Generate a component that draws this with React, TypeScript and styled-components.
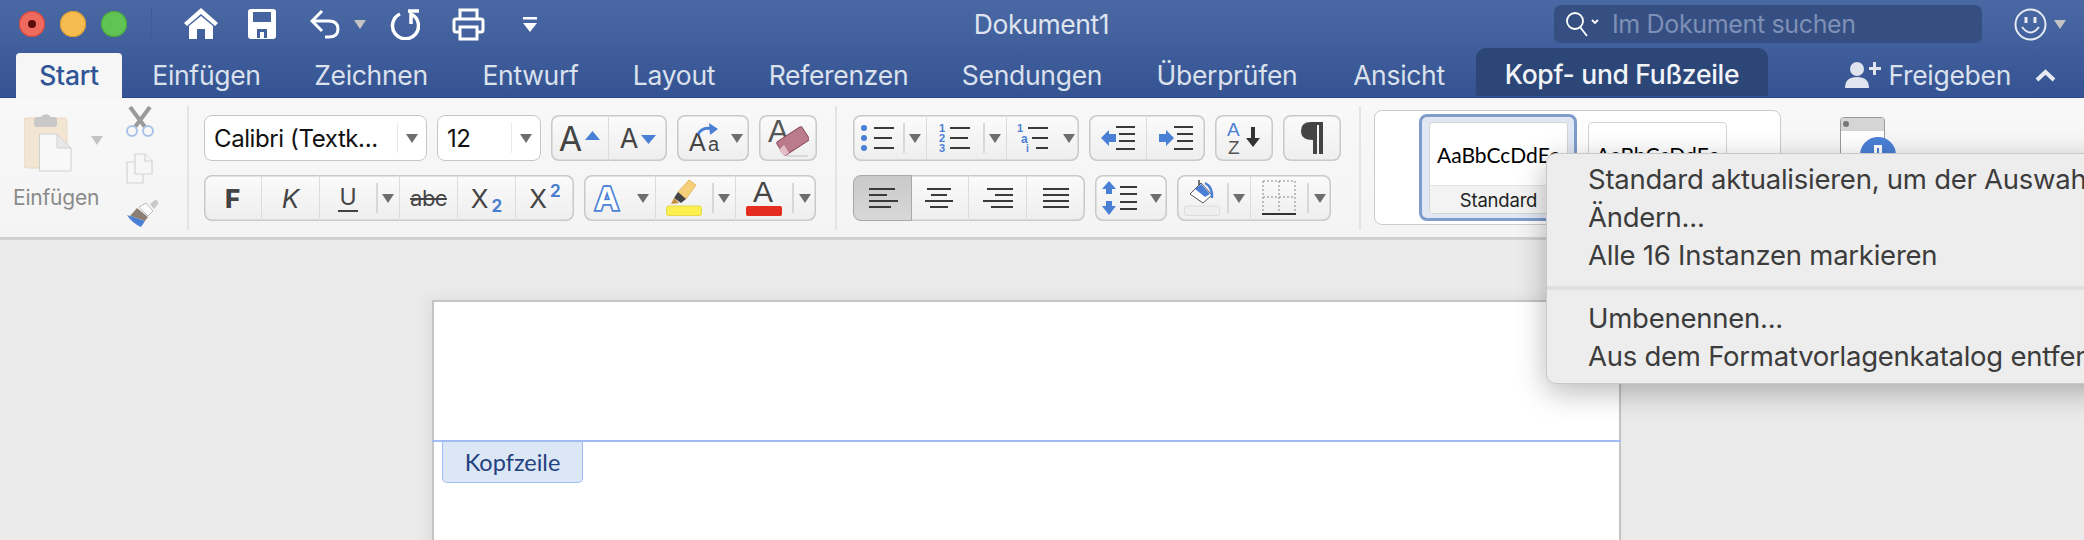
import React from "react";
import styled, { createGlobalStyle } from "styled-components";

const GlobalStyle = createGlobalStyle`
  html, body {
    margin: 0;
    height: 540px;
    overflow: hidden;
    background: #ebebeb;
    font-family: Inter, "Liberation Sans", sans-serif;
  }
`;

const Screen = styled.div`
  position: relative;
  width: 2084px;
  height: 540px;
  overflow: hidden;
  display: flex;
  flex-direction: column;
`;

const TitleBar = styled.header`
  height: 98px;
  flex: none;
  background: linear-gradient(#4a69a4, #355392);
  border-bottom: 1px solid #2b4a85;
  box-sizing: border-box;
  display: flex;
  flex-direction: column;
`;

const TopRow = styled.div`
  height: 48px;
  flex: none;
  display: grid;
  grid-template-columns: 1fr auto 1fr;
  align-items: center;
`;

const QuickBar = styled.div`
  display: flex;
  align-items: center;
  padding-left: 19px;
`;

const Light = styled.span<{ $color: string; $edge: string }>`
  width: 26px;
  height: 26px;
  border-radius: 50%;
  background: ${(p) => p.$color};
  box-shadow: inset 0 0 0 1px ${(p) => p.$edge};
  margin-right: 15px;
  display: flex;
  align-items: center;
  justify-content: center;
  flex: none;
`;

const LightDot = styled.span`
  width: 8px;
  height: 8px;
  border-radius: 50%;
  background: #5d0c09;
`;

const BarSep = styled.span`
  width: 1px;
  height: 32px;
  background: #3e5d98;
  margin: 0 32px 0 9px;
`;

const QuickIcon = styled.span<{ $gap: number }>`
  display: flex;
  align-items: center;
  margin-right: ${(p) => p.$gap}px;
`;

const DocTitle = styled.div`
  color: #dfe4ef;
  font-size: 26.5px;
  letter-spacing: -0.4px;
  margin-left: -1px;
`;

const RightTop = styled.div`
  display: flex;
  align-items: center;
  justify-content: flex-end;
  padding-right: 18px;
`;

const SearchBox = styled.div`
  width: 428px;
  height: 38px;
  border-radius: 7px;
  background: #364f82;
  box-sizing: border-box;
  padding-left: 12px;
  display: flex;
  align-items: center;
  gap: 13px;
  color: #7e90b6;
  font-size: 25px;
  letter-spacing: -0.35px;
  margin-right: 32px;
`;

const SmileyCaret = styled.span`
  margin-left: 7px;
  display: flex;
`;

const TabRow = styled.nav`
  height: 49px;
  flex: none;
  display: flex;
  align-items: flex-end;
  padding-left: 16px;
`;

const Tab = styled.div<{ $w: number; $active?: boolean; $contextual?: boolean }>`
  width: ${(p) => p.$w}px;
  flex: none;
  box-sizing: border-box;
  text-align: center;
  font-size: 26.5px;
  letter-spacing: -0.3px;
  color: #dbe1ed;
  height: 44px;
  line-height: 44px;
  ${(p) => p.$active && `
    background: #f6f6f6;
    color: #2f5597;
    font-weight: 500;
    border-radius: 4px 4px 0 0;
    height: 45px;
    margin-bottom: -1px;
  `}
  ${(p) => p.$contextual && `
    background: #2c4678;
    color: #f2f4f8;
    font-weight: 500;
    border-radius: 10px 10px 0 0;
    height: 48px;
    line-height: 52px;
    margin-left: 7px;
    margin-bottom: 1px;
  `}
`;

const ShareBox = styled.div`
  margin-left: auto;
  display: flex;
  align-items: center;
  height: 44px;
  color: #dbe1ed;
  font-size: 26.5px;
  letter-spacing: -0.3px;
  padding-right: 28px;
  gap: 7px;
`;

const Chevron = styled.span`
  margin-left: 17px;
  display: flex;
`;

const Ribbon = styled.section`
  height: 142px;
  flex: none;
  box-sizing: border-box;
  background: linear-gradient(#f8f8f8, #f4f4f4);
  border-bottom: 3px solid #d0d0d0;
  display: flex;
  align-items: flex-start;
`;

const Divider = styled.div`
  width: 2px;
  height: 124px;
  margin-top: 8px;
  background: #e4e4e4;
  flex: none;
`;

const ClipSection = styled.div`
  width: 187px;
  height: 130px;
  flex: none;
  display: flex;
  box-sizing: border-box;
  padding-top: 8px;
`;

const PasteColumn = styled.div`
  width: 126px;
  flex: none;
  padding-left: 13px;
  box-sizing: border-box;
`;

const PasteIcon = styled.div`
  padding-left: 11px;
  height: 62px;
  margin-top: 6px;
  display: flex;
  gap: 19px;
`;

const PasteCaret = styled.span`
  margin-top: 24px;
  display: flex;
`;

const PasteLabel = styled.div`
  color: #8a8a8a;
  font-size: 21px;
  margin-top: 11px;
  letter-spacing: -0.2px;
`;

const ClipTools = styled.div`
  display: flex;
  flex-direction: column;
  height: 122px;
  justify-content: space-between;
`;

const ToolSection = styled.div<{ $left: number; $w: number; $right: number }>`
  width: ${(p) => p.$w}px;
  margin: 17px ${(p) => p.$right}px 0 ${(p) => p.$left}px;
  flex: none;
  display: flex;
  flex-direction: column;
  gap: 14px;
`;

const ToolRow = styled.div`
  display: flex;
  gap: 10px;
  height: 46px;
`;

const SelectBox = styled.div<{ $w: number }>`
  width: ${(p) => p.$w}px;
  height: 46px;
  flex: none;
  box-sizing: border-box;
  background: #fff;
  border: 1.5px solid #c6c6c6;
  border-radius: 8px;
  display: flex;
  align-items: center;
  font-size: 24px;
  color: #111;
  padding-left: 9px;
`;

const SelectText = styled.span`
  flex: 1;
  white-space: nowrap;
  letter-spacing: -0.4px;
`;

const SelectArrow = styled.span`
  width: 28px;
  height: 30px;
  flex: none;
  border-left: 1.5px solid #e8e8e8;
  display: flex;
  align-items: center;
  justify-content: center;
`;

const Group = styled.div`
  display: flex;
  height: 46px;
  flex: none;
  border-radius: 8px;
  background: linear-gradient(#fbfbfb, #eeeeee);
  box-shadow: inset 0 0 0 1.5px #c9c9c9;
  overflow: hidden;
`;

const Cell = styled.div<{ $w: number; $active?: boolean; $last?: boolean }>`
  width: ${(p) => p.$w}px;
  flex: none;
  box-sizing: border-box;
  display: flex;
  align-items: center;
  justify-content: center;
  color: #444;
  border-right: ${(p) => (p.$last ? "none" : "1.5px solid #dcdcdc")};
  ${(p) => p.$active && `
    background: linear-gradient(#c9c9c9, #d8d8d8);
    border: 1.5px solid #a8a8a8;
    border-radius: 8px 0 0 8px;
  `}
`;

const CellPart = styled.span<{ $w: number }>`
  width: ${(p) => p.$w}px;
  flex: none;
  display: flex;
  align-items: center;
  justify-content: center;
`;

const Split = styled.span`
  width: 1.5px;
  height: 30px;
  background: #d8d8d8;
  flex: none;
`;

const Caret = styled.span<{ $light?: boolean }>`
  width: 0;
  height: 0;
  flex: none;
  border-left: 6px solid transparent;
  border-right: 6px solid transparent;
  border-top: 9px solid ${(p) => (p.$light ? "#c4c4c4" : "#6e6e6e")};
`;

const CaretSlot = styled.span`
  flex: 1;
  display: flex;
  align-items: center;
  justify-content: center;
`;

const Letter = styled.span<{ $size: number; $weight?: number; $italic?: boolean }>`
  font-family: Inter, "Liberation Sans", sans-serif;
  font-size: ${(p) => p.$size}px;
  font-weight: ${(p) => p.$weight ?? 400};
  font-style: ${(p) => (p.$italic ? "italic" : "normal")};
  color: #444;
  display: inline-flex;
  align-items: center;
`;

const Underlined = styled(Letter)`
  border-bottom: 2px solid #444;
  line-height: 26px;
  padding: 0 1px;
`;

const Struck = styled(Letter)`
  text-decoration: line-through;
  letter-spacing: -0.5px;
`;

const Sub = styled.span`
  font-family: Inter, "Liberation Sans", sans-serif;
  font-size: 17px;
  font-weight: 700;
  color: #4a7fd0;
  margin: 16px 0 0 3px;
`;

const Sup = styled(Sub)`
  margin: 0 0 14px 3px;
`;

const StepArrow = styled.svg<{ $up: boolean }>`
  margin-left: 3px;
  margin-bottom: ${(p) => (p.$up ? 6 : -2)}px;
`;

const Gallery = styled.div`
  width: 407px;
  height: 115px;
  margin: 12px 0 0 13px;
  flex: none;
  box-sizing: border-box;
  background: #fff;
  border: 1.5px solid #cccccc;
  border-radius: 8px;
  display: flex;
  align-items: flex-start;
  padding: 3px 0 0 44px;
`;

const StyleFrame = styled.div`
  width: 158px;
  height: 107px;
  box-sizing: border-box;
  background: #e1e7f3;
  border: 3px solid #7f9ccb;
  border-radius: 8px;
  padding: 5px 7px;
  flex: none;
`;

const StyleCard = styled.div<{ $plain?: boolean }>`
  width: 139px;
  height: 92px;
  box-sizing: border-box;
  border: 1px solid #d4d4d4;
  border-radius: 4px;
  background: #fff;
  display: flex;
  flex-direction: column;
  overflow: hidden;
  flex: none;
  ${(p) => p.$plain && `
    margin: 8px 0 0 11px;
  `}
`;

const StylePreview = styled.div`
  height: 62px;
  flex: none;
  display: flex;
  align-items: center;
  padding-left: 7px;
  font-family: Lato, sans-serif;
  font-size: 21px;
  color: #000;
  white-space: nowrap;
`;

const StyleName = styled.div`
  flex: 1;
  background: #f3f3f3;
  border-top: 1px solid #e3e3e3;
  display: flex;
  align-items: center;
  justify-content: center;
  font-size: 18.5px;
  letter-spacing: -0.2px;
  color: #222;
`;

const PaneIcon = styled.div`
  margin: 19px 0 0 59px;
  display: flex;
`;

const Canvas = styled.main`
  flex: 1;
  background: #ebebeb;
  padding: 60px 0 0 432px;
  overflow: hidden;
`;

const Page = styled.div`
  width: 1189px;
  height: 300px;
  box-sizing: border-box;
  background: #fff;
  border: 2px solid #c4c4c4;
  border-bottom: none;
  box-shadow: -6px -3px 14px rgba(0, 0, 0, 0.05);
  padding-top: 138px;
`;

const HeaderRule = styled.div`
  height: 2px;
  background: #a0bcf5;
  margin-left: -2px;
  margin-right: -2px;
`;

const HeaderTag = styled.div`
  width: 141px;
  height: 41px;
  margin-left: 8px;
  box-sizing: border-box;
  background: #dce7f5;
  border: 1px solid #a0bcf5;
  border-top: none;
  border-radius: 0 0 5px 5px;
  display: flex;
  align-items: center;
  justify-content: center;
  font-family: Lato, sans-serif;
  font-size: 23.5px;
  color: #23407f;
`;

const ContextMenu = styled.div`
  position: absolute;
  left: 1546px;
  top: 153px;
  width: 640px;
  height: 231px;
  box-sizing: border-box;
  background: #ededed;
  border: 1px solid #c8c8c8;
  border-radius: 10px;
  box-shadow: 0 8px 30px rgba(0, 0, 0, 0.28);
  padding-top: 6px;
`;

const MenuItem = styled.div`
  height: 38px;
  line-height: 38px;
  padding-left: 41px;
  font-size: 27.5px;
  letter-spacing: -0.25px;
  color: #3c3c3c;
  white-space: nowrap;
`;

const MenuSep = styled.div`
  height: 4px;
  background: #dfdfdf;
  margin: 12px 0 9px;
`;

const Blue = "#4a7fd6";
const Ink = "#3a3a3a";

const HomeIcon = () => (
  <svg width="34" height="32" viewBox="0 0 34 32">
    <path fill="#fff" d="M17 0 L34 15 L31 18 L17 6 L3 18 L0 15z" />
    <path fill="#fff" d="M5 18 L17 8 L29 18 V31 H21 V21 H13 V31 H5z" />
  </svg>
);

const SaveIcon = () => (
  <svg width="28" height="30" viewBox="0 0 28 30">
    <path
      fill="#fff"
      fillRule="evenodd"
      d="M3 0 H25 Q28 0 28 3 V27 Q28 30 25 30 H3 Q0 30 0 27 V3 Q0 0 3 0z M5 3 V13 H23 V3z M9 29 H19 V20 H9z M12 29 V23 H16 V29z"
    />
  </svg>
);

const UndoIcon = () => (
  <svg width="30" height="30" viewBox="0 0 30 30" fill="none" stroke="#fff" strokeWidth="3">
    <path d="M12 2 L2 12 L12 22" />
    <path d="M2 12 H19 Q28 12 28 20 Q28 28 19 28 H15" />
  </svg>
);

const RedoIcon = () => (
  <svg width="30" height="32" viewBox="0 0 30 32" fill="none" stroke="#fff" strokeWidth="3.5">
    <path d="M10 6 A13 13 0 1 0 21 6 V16" />
    <path d="M18 3 H29" />
  </svg>
);

const PrintIcon = () => (
  <svg width="33" height="33" viewBox="0 0 33 33" fill="none" stroke="#fff" strokeWidth="3">
    <path d="M8 11 V2 H25 V11" />
    <path d="M8 24 H4 Q2 24 2 22 V13 Q2 11 4 11 H29 Q31 11 31 13 V22 Q31 24 29 24 H25" />
    <path d="M8 19 H25 V31 H8z" />
  </svg>
);

const CustomizeIcon = () => (
  <svg width="14" height="15" viewBox="0 0 14 15">
    <path fill="#fff" d="M0 0 H14 V2.5 H0z M0 6 H14 L7 15z" />
  </svg>
);

const LensIcon = () => (
  <svg width="33" height="26" viewBox="0 0 33 26" fill="none" stroke="#fff" strokeWidth="1.8">
    <circle cx="9" cy="10" r="8" />
    <path d="M14 16 L21 25" />
    <path d="M26 9 L29 12 L32 9" />
  </svg>
);

const SmileyIcon = () => (
  <svg width="33" height="33" viewBox="0 0 33 33" fill="none" stroke="#e6eaf3" strokeWidth="2">
    <circle cx="16.5" cy="16.5" r="15" />
    <path d="M8 19 Q16.5 30 25 19" />
    <path d="M12 9 V15 M21 9 V15" strokeWidth="3" />
  </svg>
);

const ShareIcon = () => (
  <svg width="36" height="28" viewBox="0 0 36 28" fill="#dfe4ef">
    <circle cx="12" cy="8" r="7" />
    <path d="M0 27 Q0 16 12 16 Q24 16 24 27z" />
    <path d="M24 6 H28 V1 H31 V6 H36 V9 H31 V14 H28 V9 H24z" />
  </svg>
);

const ChevronIcon = () => (
  <svg width="21" height="13" viewBox="0 0 21 13" fill="none" stroke="#e6eaf3" strokeWidth="4">
    <path d="M2 11 L10.5 3 L19 11" />
  </svg>
);

const ClipboardIcon = () => (
  <svg width="48" height="60" viewBox="0 0 48 60">
    <rect x="0" y="6" width="43" height="50" rx="3" fill="#f2e5d2" stroke="#e8d9c2" />
    <path fill="#c8c8c8" d="M10 8 Q10 5 14 5 H17 A6 6 0 0 1 27 5 H30 Q33 5 33 8 V12 Q33 15 30 15 H13 Q10 15 10 12z" />
    <path fill="#f8f8f8" stroke="#d0d0d0" d="M15.5 22 H33 L47 36 V59 H15.5z" />
    <path fill="#e8e8e8" stroke="#d0d0d0" d="M33 22 V36 H47z" />
  </svg>
);

const ScissorsIcon = () => (
  <svg width="28" height="32" viewBox="0 0 28 32" fill="none">
    <path stroke="#9a9a9a" strokeWidth="4" d="M4 1 L19 21 M24 1 L9 21" />
    <circle cx="6" cy="25" r="5" stroke="#a9c3e8" strokeWidth="2" />
    <circle cx="22" cy="25" r="5" stroke="#a9c3e8" strokeWidth="2" />
  </svg>
);

const CopyIcon = () => (
  <svg width="27" height="31" viewBox="0 0 27 31" fill="#f6f6f6" stroke="#d4d4d4" strokeWidth="1.2">
    <path d="M1 9 H17 V30 H1z" />
    <path d="M9 1 H19 L26 8 V21 H9z" />
    <path d="M19 1 V8 H26" />
  </svg>
);

const BrushIcon = () => (
  <svg width="33" height="29" viewBox="0 0 33 29">
    <path fill="#c9c9c9" d="M24 5 L29 1 Q33 1 32 5 L28 10z" />
    <path fill="#fbfbfb" stroke="#bdbdbd" d="M13 8 L20 4 L27 12 L22 17z" />
    <path fill="#8d7f74" d="M11 9 L22 18 L19 22 L4 17z" />
    <path fill="#4a7fd6" d="M1 16 L19 22 L15 28 Q6 24 1 16z" />
  </svg>
);

const AStep = ({ up, size }: { up: boolean; size: number }) => (
  <>
    <Letter $size={size}>A</Letter>
    <StepArrow $up={up} width="15" height="9" viewBox="0 0 15 9">
      <path fill={Blue} d={up ? "M7.5 0 L15 9 H0z" : "M0 0 H15 L7.5 9z"} />
    </StepArrow>
  </>
);

const ChangeCaseIcon = () => (
  <svg width="44" height="30" viewBox="0 0 44 30" fontFamily="Liberation Sans" fill="#444">
    <text x="10" y="28" fontSize="25">A</text>
    <text x="29" y="28" fontSize="20">a</text>
    <path fill="none" stroke={Blue} strokeWidth="3" d="M19 11 Q24 3 33 6" />
    <path fill={Blue} d="M30 0 L39 6 L31 12z" />
  </svg>
);

const EraserIcon = () => (
  <svg width="42" height="38" viewBox="0 0 42 38">
    <text x="1" y="23" fontFamily="Liberation Sans" fontSize="31" fill="#555">A</text>
    <rect x="11" y="14" width="30" height="16" rx="2" fill="#bb7b8d" stroke="#8e5064" transform="rotate(-33 26 22)" />
    <path fill="#e6bcc8" d="M12 31 L17 37 L22 34 L17 26z" />
    <path stroke="#d0d0d0" strokeWidth="1.5" d="M20 37 H41" />
  </svg>
);

const GlowA = () => (
  <svg width="30" height="32" viewBox="0 0 30 32">
    <text
      x="3"
      y="28"
      fontFamily="Liberation Sans"
      fontWeight="700"
      fontSize="33"
      fill="#fff"
      stroke={Blue}
      strokeWidth="3.5"
      paintOrder="stroke"
    >
      A
    </text>
  </svg>
);

const MarkerIcon = () => (
  <svg width="36" height="38" viewBox="0 0 36 38">
    <path fill="#f5cf7a" stroke="#e5bb62" d="M12 13 L23 1 L30 6 L20 20z" />
    <path fill="#444" d="M12 13 L20 20 L15 24 L8 19z" />
    <path fill="#c58f3a" d="M8 19 L13 24 L5 25z" />
    <rect x="0.5" y="27" width="35" height="9.5" rx="2" fill="#fbf050" stroke="#e4d94a" />
  </svg>
);

const FontColorIcon = () => (
  <svg width="36" height="38" viewBox="0 0 36 38">
    <text x="7" y="23" fontFamily="Liberation Sans" fontSize="30" fill="#444">A</text>
    <rect x="0" y="27" width="36" height="10" rx="2" fill="#e42c1f" />
  </svg>
);

const BulletsIcon = () => (
  <svg width="34" height="26" viewBox="0 0 34 26">
    <circle cx="3" cy="3" r="3" fill={Blue} />
    <circle cx="3" cy="13" r="3" fill={Blue} />
    <circle cx="3" cy="23" r="3" fill={Blue} />
    <path stroke={Ink} strokeWidth="2" d="M13 3 H33 M13 13 H31 M13 23 H33" />
  </svg>
);

const NumberedIcon = () => (
  <svg width="32" height="30" viewBox="0 0 32 30" fontFamily="Liberation Sans" fontWeight="700" fontSize="11" fill={Blue}>
    <text x="0" y="9">1</text>
    <text x="0" y="19">2</text>
    <text x="0" y="29">3</text>
    <path stroke={Ink} strokeWidth="2" d="M11 5 H31 M11 15 H29 M11 25 H31" />
  </svg>
);

const OutlineIcon = () => (
  <svg width="32" height="30" viewBox="0 0 32 30" fontFamily="Liberation Sans" fontWeight="700" fill={Blue}>
    <text x="0" y="9" fontSize="11">1</text>
    <text x="4" y="20" fontSize="12">a</text>
    <text x="9" y="29" fontSize="10">i</text>
    <path stroke={Ink} strokeWidth="2" d="M11 5 H31 M15 15 H31 M19 25 H31" />
  </svg>
);

const IndentIcon = ({ out }: { out: boolean }) => (
  <svg width="34" height="24" viewBox="0 0 34 24">
    <path
      fill={Blue}
      d={out ? "M0 12 L8 4 V8 H15 V16 H8 V20z" : "M15 12 L7 4 V8 H0 V16 H7 V20z"}
    />
    <path stroke={Ink} strokeWidth="2" d="M15 1 H34 M18 8 H34 M18 15 H34 M15 23 H34" />
  </svg>
);

const SortIcon = () => (
  <svg width="34" height="34" viewBox="0 0 34 34" fontFamily="Liberation Sans" fontSize="19">
    <text x="0" y="15" fill={Blue}>A</text>
    <text x="1" y="33" fill="#555">Z</text>
    <path fill="#333" d="M24 6 H28 V17 H33 L26 26 L19 17 H24z" />
  </svg>
);

const PilcrowIcon = () => (
  <svg width="24" height="34" viewBox="0 0 24 34">
    <path fill="#444" d="M11 1 H23 V33 H19 V4 H17 V33 H13 V19 Q1 19 1 10 Q1 1 11 1z" />
  </svg>
);

const AlignIcon = ({ rows }: { rows: [number, number][] }) => (
  <svg width="30" height="20" viewBox="0 0 30 20">
    {rows.map(([a, b], i) => (
      <path key={i} stroke={Ink} strokeWidth="2" d={`M${a} ${1 + i * 6} H${b}`} />
    ))}
  </svg>
);

const SpacingIcon = () => (
  <svg width="36" height="34" viewBox="0 0 36 34">
    <path fill={Blue} d="M7 0 L14 8 H10 V13 H4 V8 H0z M4 20 H10 V25 H14 L7 34 L0 25 H4z" />
    <path stroke={Ink} strokeWidth="2" d="M18 6 H35 M18 13 H35 M18 21 H35 M18 28 H35" />
  </svg>
);

const BucketIcon = () => (
  <svg width="36" height="38" viewBox="0 0 36 38">
    <path fill="#fff" stroke="#555" d="M6 15 L17 4 L28 16 L19 24z" />
    <path fill={Blue} d="M11 10 L17 5 L26 15 L21 18z" />
    <path fill="none" stroke="#444" strokeWidth="1.5" d="M15 6 V1" />
    <path fill="none" stroke={Blue} strokeWidth="2.5" d="M21 4 Q29 8 28 19" />
    <rect x="0.5" y="27" width="35" height="9.5" rx="2" fill="#efefef" stroke="#dcdcdc" />
  </svg>
);

const BorderIcon = () => (
  <svg width="34" height="36" viewBox="0 0 34 36" fill="none">
    <path stroke="#aaa" strokeWidth="1.5" strokeDasharray="2 2" d="M1 1 H33 V33 M1 1 V33 M17 1 V33 M1 17 H33" />
    <path stroke="#333" strokeWidth="2" d="M0 34 H34" />
  </svg>
);

const PaneGlyph = () => (
  <svg width="58" height="52" viewBox="0 0 58 52">
    <rect x="0.5" y="0.5" width="44" height="50" rx="3" fill="#fff" stroke="#9a9a9a" />
    <path fill="#d5d5d5" d="M1 3 Q1 1 3 1 H42 Q44 1 44 3 V14 H1z" />
    <circle cx="6" cy="7" r="3" fill="#777" />
    <circle cx="38" cy="38" r="18" fill={Blue} />
    <path fill="#fff" d="M34 28 H42 V40 H39 V31 H37 V40 H34z" />
  </svg>
);

const WithCaret = ({ w, icon }: { w: number; icon: React.ReactNode }) => (
  <>
    <CellPart $w={w}>{icon}</CellPart>
    <Split />
    <CaretSlot>
      <Caret />
    </CaretSlot>
  </>
);

const TABS: { label: string; w: number }[] = [
  { label: "Einfügen", w: 169 },
  { label: "Zeichnen", w: 160 },
  { label: "Entwurf", w: 159 },
  { label: "Layout", w: 128 },
  { label: "Referenzen", w: 201 },
  { label: "Sendungen", w: 186 },
  { label: "Überprüfen", w: 204 },
  { label: "Ansicht", w: 140 },
];

export default function App() {
  return (
    <Screen>
      <GlobalStyle />
      <TitleBar>
        <TopRow>
          <QuickBar>
            <Light $color="#ee6a5f" $edge="#c9453c">
              <LightDot />
            </Light>
            <Light $color="#f5bd4f" $edge="#d59b33" />
            <Light $color="#61c354" $edge="#47a23b" />
            <BarSep />
            <QuickIcon $gap={30}><HomeIcon /></QuickIcon>
            <QuickIcon $gap={34}><SaveIcon /></QuickIcon>
            <QuickIcon $gap={14}><UndoIcon /></QuickIcon>
            <QuickIcon $gap={24}><Caret $light /></QuickIcon>
            <QuickIcon $gap={32}><RedoIcon /></QuickIcon>
            <QuickIcon $gap={38}><PrintIcon /></QuickIcon>
            <QuickIcon $gap={0}><CustomizeIcon /></QuickIcon>
          </QuickBar>
          <DocTitle>Dokument1</DocTitle>
          <RightTop>
            <SearchBox>
              <LensIcon />
              Im Dokument suchen
            </SearchBox>
            <SmileyIcon />
            <SmileyCaret><Caret $light /></SmileyCaret>
          </RightTop>
        </TopRow>
        <TabRow>
          <Tab $w={106} $active>Start</Tab>
          {TABS.map((tab) => (
            <Tab key={tab.label} $w={tab.w}>{tab.label}</Tab>
          ))}
          <Tab $w={292} $contextual>Kopf- und Fußzeile</Tab>
          <ShareBox>
            <ShareIcon />
            Freigeben
            <Chevron><ChevronIcon /></Chevron>
          </ShareBox>
        </TabRow>
      </TitleBar>

      <Ribbon>
        <ClipSection>
          <PasteColumn>
            <PasteIcon>
              <ClipboardIcon />
              <PasteCaret><Caret $light /></PasteCaret>
            </PasteIcon>
            <PasteLabel>Einfügen</PasteLabel>
          </PasteColumn>
          <ClipTools>
            <ScissorsIcon />
            <CopyIcon />
            <BrushIcon />
          </ClipTools>
        </ClipSection>
        <Divider />

        <ToolSection $left={15} $w={613} $right={18}>
          <ToolRow>
            <SelectBox $w={223}>
              <SelectText>Calibri (Textk...</SelectText>
              <SelectArrow><Caret /></SelectArrow>
            </SelectBox>
            <SelectBox $w={104}>
              <SelectText>12</SelectText>
              <SelectArrow><Caret /></SelectArrow>
            </SelectBox>
            <Group>
              <Cell $w={58}><AStep up size={34} /></Cell>
              <Cell $w={58} $last><AStep up={false} size={27} /></Cell>
            </Group>
            <Group>
              <Cell $w={72} $last>
                <CellPart $w={48}><ChangeCaseIcon /></CellPart>
                <CaretSlot><Caret /></CaretSlot>
              </Cell>
            </Group>
            <Group>
              <Cell $w={58} $last><EraserIcon /></Cell>
            </Group>
          </ToolRow>
          <ToolRow>
            <Group>
              <Cell $w={58}><Letter $size={26} $weight={800}>F</Letter></Cell>
              <Cell $w={58}><Letter $size={26} $italic>K</Letter></Cell>
              <Cell $w={80}>
                <WithCaret w={56} icon={<Underlined $size={23}>U</Underlined>} />
              </Cell>
              <Cell $w={58}><Struck $size={22}>abc</Struck></Cell>
              <Cell $w={58}><Letter $size={26}>X</Letter><Sub>2</Sub></Cell>
              <Cell $w={58} $last><Letter $size={26}>X</Letter><Sup>2</Sup></Cell>
            </Group>
            <Group>
              <Cell $w={72}>
                <CellPart $w={46}><GlowA /></CellPart>
                <CaretSlot><Caret /></CaretSlot>
              </Cell>
              <Cell $w={80}>
                <WithCaret w={56} icon={<MarkerIcon />} />
              </Cell>
              <Cell $w={80} $last>
                <WithCaret w={56} icon={<FontColorIcon />} />
              </Cell>
            </Group>
          </ToolRow>
        </ToolSection>
        <Divider />

        <ToolSection $left={16} $w={488} $right={18}>
          <ToolRow>
            <Group>
              <Cell $w={74}>
                <WithCaret w={50} icon={<BulletsIcon />} />
              </Cell>
              <Cell $w={80}>
                <WithCaret w={56} icon={<NumberedIcon />} />
              </Cell>
              <Cell $w={72} $last>
                <CellPart $w={52}><OutlineIcon /></CellPart>
                <CaretSlot><Caret /></CaretSlot>
              </Cell>
            </Group>
            <Group>
              <Cell $w={58}><IndentIcon out /></Cell>
              <Cell $w={58} $last><IndentIcon out={false} /></Cell>
            </Group>
            <Group>
              <Cell $w={58} $last><SortIcon /></Cell>
            </Group>
            <Group>
              <Cell $w={58} $last><PilcrowIcon /></Cell>
            </Group>
          </ToolRow>
          <ToolRow>
            <Group>
              <Cell $w={59} $active>
                <AlignIcon rows={[[1, 27], [1, 19], [1, 30], [1, 23]]} />
              </Cell>
              <Cell $w={57}>
                <AlignIcon rows={[[2, 26], [6, 22], [0, 28], [5, 23]]} />
              </Cell>
              <Cell $w={58}>
                <AlignIcon rows={[[4, 30], [12, 30], [0, 30], [8, 30]]} />
              </Cell>
              <Cell $w={58} $last>
                <AlignIcon rows={[[2, 28], [2, 28], [2, 28], [2, 28]]} />
              </Cell>
            </Group>
            <Group>
              <Cell $w={72} $last>
                <CellPart $w={50}><SpacingIcon /></CellPart>
                <CaretSlot><Caret /></CaretSlot>
              </Cell>
            </Group>
            <Group>
              <Cell $w={74}>
                <WithCaret w={50} icon={<BucketIcon />} />
              </Cell>
              <Cell $w={80} $last>
                <WithCaret w={56} icon={<BorderIcon />} />
              </Cell>
            </Group>
          </ToolRow>
        </ToolSection>
        <Divider />

        <Gallery>
          <StyleFrame>
            <StyleCard>
              <StylePreview>AaBbCcDdEe</StylePreview>
              <StyleName>Standard</StyleName>
            </StyleCard>
          </StyleFrame>
          <StyleCard $plain>
            <StylePreview>AaBbCcDdEe</StylePreview>
          </StyleCard>
        </Gallery>
        <PaneIcon><PaneGlyph /></PaneIcon>
      </Ribbon>

      <Canvas>
        <Page>
          <HeaderRule />
          <HeaderTag>Kopfzeile</HeaderTag>
        </Page>
      </Canvas>

      <ContextMenu>
        <MenuItem>Standard aktualisieren, um der Auswahl anzupassen</MenuItem>
        <MenuItem>Ändern...</MenuItem>
        <MenuItem>Alle 16 Instanzen markieren</MenuItem>
        <MenuSep />
        <MenuItem>Umbenennen...</MenuItem>
        <MenuItem>Aus dem Formatvorlagenkatalog entfernen</MenuItem>
      </ContextMenu>
    </Screen>
  );
}
